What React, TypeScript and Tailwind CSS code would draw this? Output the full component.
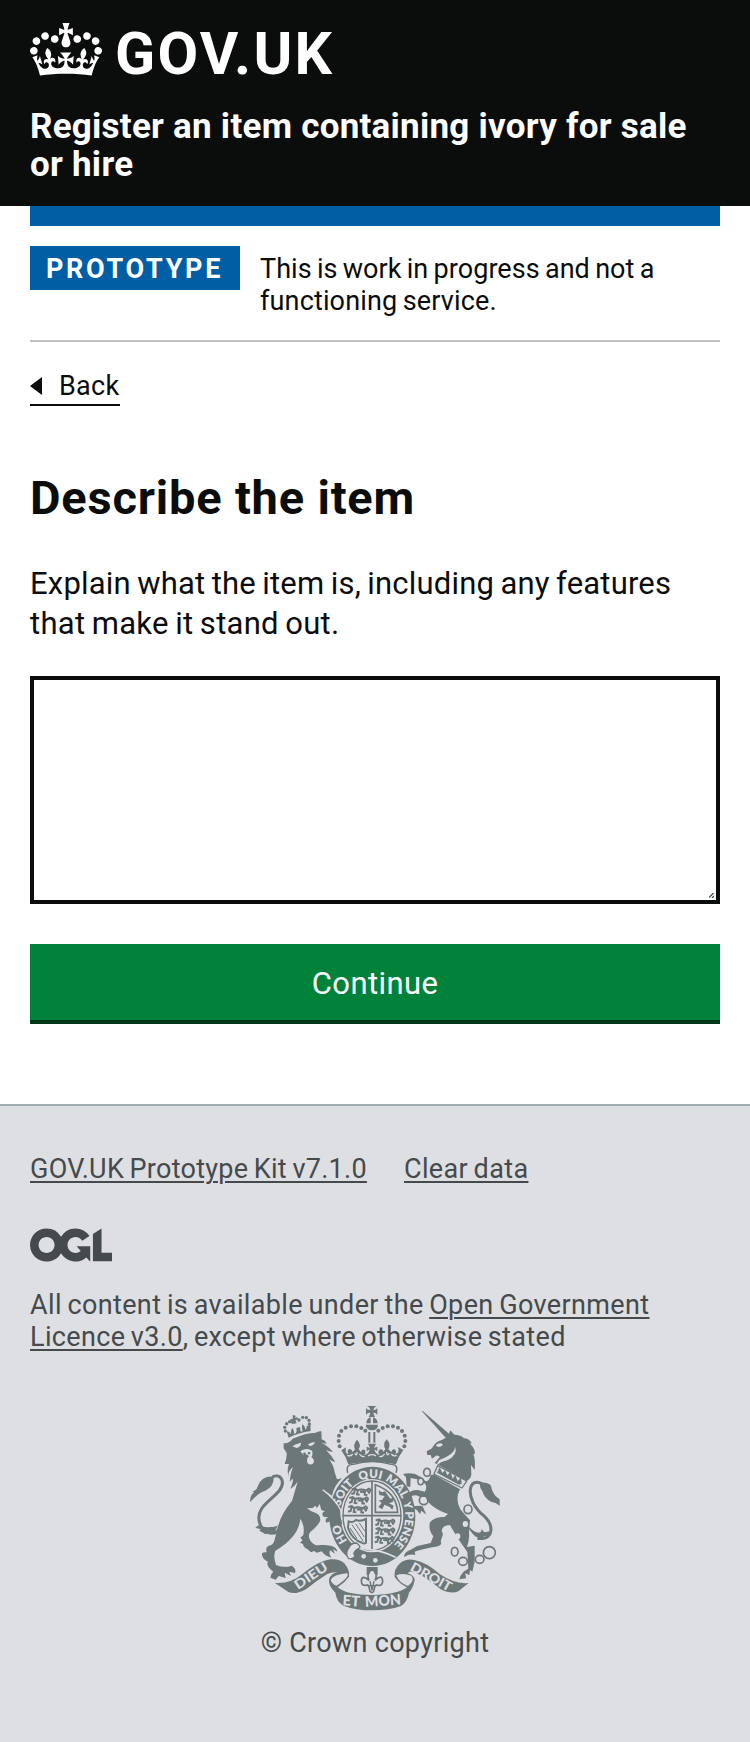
import React from "react";

function Crown() {
  return (
    <svg viewBox="0 0 132 97" className="h-[53px] w-[72px] shrink-0" fill="currentColor" aria-hidden="true">
      <path
        fillRule="evenodd"
        d="M25 30.2c3.5 1.5 7.7-.2 9.1-3.7 1.5-3.6-.2-7.8-3.9-9.2-3.6-1.4-7.6.3-9.1 3.9-1.4 3.5.3 7.5 3.9 9zM9 39.5c3.6 1.5 7.8-.2 9.2-3.7 1.5-3.6-.2-7.8-3.9-9.1-3.6-1.5-7.6.2-9.1 3.8-1.4 3.5.3 7.5 3.8 9zM4.4 57.2c3.5 1.5 7.7-.2 9.1-3.8 1.5-3.6-.2-7.7-3.9-9.1-3.5-1.5-7.6.3-9.1 3.8-1.4 3.5.3 7.6 3.9 9.1zm38.3-21.4c3.5 1.5 7.7-.2 9.1-3.8 1.5-3.6-.2-7.7-3.9-9.1-3.6-1.5-7.6.3-9.1 3.8-1.3 3.6.4 7.7 3.9 9.1zm64.4-5.6c-3.6 1.5-7.8-.2-9.1-3.7-1.5-3.6.2-7.8 3.8-9.2 3.6-1.4 7.7.3 9.2 3.9 1.3 3.5-.4 7.5-3.9 9zm15.9 9.3c-3.6 1.5-7.7-.2-9.1-3.7-1.5-3.6.2-7.8 3.7-9.1 3.6-1.5 7.7.2 9.2 3.8 1.5 3.5-.3 7.5-3.8 9zm4.7 17.7c-3.6 1.5-7.8-.2-9.2-3.8-1.5-3.6.2-7.7 3.9-9.1 3.6-1.5 7.7.3 9.2 3.8 1.3 3.5-.4 7.6-3.9 9.1zM89.3 35.8c-3.6 1.5-7.8-.2-9.2-3.8-1.4-3.6.2-7.7 3.9-9.1 3.6-1.5 7.7.3 9.2 3.8 1.4 3.6-.3 7.7-3.9 9.1zM69.7 17.7l8.9 4.7V9.3l-8.9 2.8c-.2-.3-.5-.6-.9-.9L72.4 0H59.6l3.5 11.2c-.3.3-.6.5-.9.9l-8.8-2.8v13.1l8.8-4.7c.3.3.6.7.9.9l-5 15.4v.1c-.2.8-.4 1.6-.4 2.4 0 4.1 3.1 7.5 7 8.1h.2c.3 0 .7.1 1 .1.4 0 .7 0 1-.1h.2c4-.6 7.1-4.1 7.1-8.1 0-.8-.1-1.7-.4-2.4V34l-5.1-15.4c.4-.2.7-.6 1-.9zM66 92.8c16.9 0 32.8 1.1 47.1 3.2 4-16.9 8.9-26.7 14-33.5l-9.6-3.4c1 4.9 1.1 7.2 0 10.2-1.5-1.4-3-4.3-4.2-8.7L108.6 76c2.8-2 5-3.2 7.5-3.3-4.4 9.4-10 11.9-13.6 11.2-4.3-.8-6.3-4.6-5.6-7.9 1-4.7 5.7-5.9 8-.5 4.3-8.7-3-11.4-7.6-8.8 7.1-7.2 7.9-13.5 2.1-21.1-8 6.1-8.1 12.3-4.5 20.8-4.7-5.4-12.1-2.5-9.5 6.2 3.4-5.2 7.9-2 7.2 3.1-.6 4.3-6.4 7.8-13.5 7.2-10.3-.9-10.9-8-11.2-13.8 2.5-.5 7.1 1.8 11 7.3L80.2 60c-4.1 4.4-8 5.3-12.3 5.4 1.4-4.4 8-11.6 8-11.6H55.5s6.4 7.2 7.9 11.6c-4.2-.1-8-1-12.3-5.4l1.4 16.4c3.9-5.5 8.5-7.7 10.9-7.3-.3 5.8-.9 12.8-11.1 13.8-7.2.6-12.9-2.9-13.5-7.2-.7-5 3.8-8.3 7.1-3.1 2.7-8.7-4.6-11.6-9.4-6.2 3.7-8.5 3.6-14.7-4.6-20.8-5.8 7.6-5 13.9 2.2 21.1-4.7-2.6-11.9.1-7.7 8.8 2.3-5.5 7.1-4.2 8.1.5.7 3.3-1.3 7.1-5.7 7.9-3.5.7-9-1.8-13.5-11.2 2.5.1 4.7 1.3 7.5 3.3l-4.7-15.4c-1.2 4.4-2.7 7.2-4.3 8.7-1.1-3-.9-5.3 0-10.2l-9.5 3.4c5 6.9 9.9 16.7 14 33.5 14.8-2.1 30.8-3.2 47.7-3.2z"
      />
    </svg>
  );
}

function OglLogo() {
  return (
    <svg viewBox="0 0 483.2 195.7" className="block h-[34px] w-[82px]" fill="currentColor" aria-hidden="true">
      <path d="M421.5 142.8V.1l-50.7 32.3v161.1h112.4v-50.7zm-122.3-9.6A47.12 47.12 0 0 1 221 97.8c0-26 21.1-47.1 47.1-47.1 16.7 0 31.4 8.7 39.7 21.8l42.7-27.2A97.63 97.63 0 0 0 268.1 0c-36.5 0-68.3 20.1-85.1 49.7A98 98 0 0 0 97.8 0C43.9 0 0 43.9 0 97.8s43.9 97.8 97.8 97.8c36.5 0 68.3-20.1 85.1-49.7a97.76 97.76 0 0 0 149.6 25.4l19.4 22.2h3v-87.8h-80l24.3 27.5zM97.8 145c-26 0-47.1-21.1-47.1-47.1s21.1-47.1 47.1-47.1 47.1 21.1 47.1 47.1S123.8 145 97.8 145" />
    </svg>
  );
}

const INK = "#6c7777";
const PAPER = "#dedfe3";

const crownPearls = [
  [299, 499], [296, 483], [297, 467], [304, 453], [317, 443], [333, 439], [349, 439], [364, 444], [376, 452],
  [493, 499], [496, 483], [494, 467], [486, 453], [474, 443], [459, 439], [443, 439], [428, 444], [415, 452],
];
const lionPearls = [
  [136, 453], [134, 442], [140, 431], [149, 425], [158, 427], [177, 420], [188, 412], [199, 413], [207, 421], [208, 432],
];
const chainLinks = [
  [561, 577, 10, 12], [542, 604, 8, 10], [551, 661, 13, 13], [684, 688, 12, 13],
  [644, 815, 10, 13], [669, 844, 13, 12], [719, 838, 13, 12], [748, 818, 18, 18],
];

function Lion() {
  return (
    <g>
      <path d="M146 473 L140 454 Q150 455 151 463 Q153 449 157 443 Q162 451 163 462 Q169 461 170 452 L169 444 L180 441 L181 451 Q183 456 188 454 Q184 443 187 433 Q196 439 196 450 Q202 445 200 438 L211 434 L212 453 Q177 458 146 473z" />
      <path d="M158 405 l9 2 -2 7 7 -3 2 9 -8 -1 4 10 -8 3 -2 -10 -6 4 -3 -9 8 -1z" />
      {lionPearls.map(([x, y], i) => <circle key={i} cx={x} cy={y} r="5" />)}
      <path d="M131 490 Q148 490 158 476 Q198 458 227 458 Q236 452 244 454 L245 478 Q256 481 260 491 Q249 490 243 488 Q263 496 279 516 Q266 515 258 510 Q276 528 286 546 Q275 545 267 538 Q281 556 284 577 L289 592 Q287 601 306 595 Q282 617 276 647 L247 627 Q282 659 294 681 Q300 700 307 733 L295 728 L292 735 L283 726 L276 737 L270 724 L259 728 Q252 717 265 712 L250 710 Q242 697 255 694 L244 690 L239 672 L231 684 L226 677 L218 684 L201 685 Q212 694 220 696 Q245 703 240 724 Q229 743 211 756 Q202 765 211 782 Q225 800 241 795 Q258 794 272 797 Q291 801 292 815 L279 807 L285 822 L271 811 Q264 819 274 833 Q254 828 245 814 L231 818 L222 813 L213 817 L203 808 Q190 802 189 792 L180 788 L188 781 L181 773 L190 765 Q195 737 181 716 Q178 747 157 771 Q137 795 106 812 Q99 829 108 855 Q131 865 155 857 Q170 867 165 879 L148 875 L153 888 L134 878 L137 894 L116 888 L107 899 L91 893 Q91 882 100 875 Q76 856 84 845 Q64 836 66 820 Q72 815 80 817 Q75 801 86 797 Q98 797 103 783 Q107 767 113 742 Q124 700 156 663 L173 605 Q164 619 151 627 Q163 597 157 596 L149 606 Q152 577 159 561 Q140 577 147 594 Q139 573 147 552 L134 552 Q141 535 140 519 L131 505z" />
      <path d="M120 745 C101 772 65 759 58 724 C48 682 92 663 117 633 C140 602 119 579 97 591" fill="none" stroke={INK} strokeWidth="9" />
      <path d="M101 590 Q103 619 76 632 Q55 638 31 666 Q28 650 42 637 L37 635 Q52 629 54 617 Q67 586 101 590z" />
      <path d="M46 743 Q54 734 61 735 Q74 744 90 741 Q108 741 114 735 L104 757 Q92 751 76 763 Q69 757 58 752 L62 748z" />
      <g fill={PAPER}>
        <path d="M157 499 Q166 492 183 488 Q184 500 170 504z M204 493 Q213 487 225 486 Q221 498 209 498z" />
        <path d="M181 514 Q200 501 216 512 Q220 523 214 531 Q226 540 220 550 Q210 558 202 548 Q199 535 207 529 Q203 520 190 525z" />
      </g>
      <path d="M188 520 l7 -3 4 7 -6 3z M204 516 l7 0 -1 7 -7 0z" />
      <path d="M248 629 Q285 656 302 690 L305 718" fill="none" stroke={PAPER} strokeWidth="4" />
    </g>
  );
}

function Unicorn() {
  return (
    <g>
      <path d="M545 393 L549 394 L627 461 L631 451 L643 464 Q662 464 672 475 Q687 475 695 490 L690 491 Q705 505 705 521 L700 522 Q707 541 704 570 L693 555 L694 584 Q692 598 678 603 L596 555 L584 549 L600 530 L590 526 L576 536 L572 525 L562 525 L560 514 L576 505 Q585 484 607 479 L617 473z" />
      <path d="M587 496 Q600 485 609 494 Q603 501 594 501z M598 540 Q643 524 646 501 Q653 526 622 541 Q605 544 587 557z" fill={PAPER} />
      <path d="M583 584 L660 628 Q644 656 661 688 Q674 704 690 721 L687 760 Q689 778 681 801 L704 797 L704 845 L697 875 L690 870 L688 885 L676 880 L678 895 L658 898 Q662 877 685 866 L682 816 Q646 765 630 735 Q607 736 605 752 L609 763 L602 784 Q608 794 594 799 Q540 809 524 815 L526 825 Q509 821 492 831 Q493 815 512 809 L532 798 L572 789 L580 769 Q564 749 570 727 Q583 711 613 711 L624 702 Q567 682 557 651 L538 650 Q524 641 510 651 L523 680 L517 681 Q536 675 548 679 L559 704 L544 692 L540 703 L530 689 Q519 686 513 668 L500 645 Q510 630 533 630 L555 635 Q564 617 552 608 L532 598 L512 594 L511 621 L500 619 L498 592 L489 582 Q507 577 525 582 Q545 590 557 604 Q568 603 572 584z" />
      <path d="M593 557 L680 603 L666 624 L582 582z" fill={PAPER} stroke={INK} strokeWidth="4" />
      <path d="M591 578 L599 562 L607 579 L615 570 L622 586 L632 575 L638 596 L646 584 L653 604 L663 592 L665 611 L657 614z" />
      <path d="M712 775 C763 782 762 735 731 707 C670 656 686 585 728 613" fill="none" stroke={INK} strokeWidth="9" />
      <path d="M720 608 Q756 605 756 629 Q761 646 779 658 L779 677 Q767 667 753 665 Q732 654 727 633 Q718 623 720 608z" />
      <path d="M681 735 Q708 764 722 757 L725 748 L733 757 L756 753 L743 768 L733 768 L726 781 Q719 769 707 770 Q692 758 681 735z" />
      <g fill="none" stroke={INK} strokeWidth="5">
        {chainLinks.map(([x, y, rx, ry], i) => <ellipse key={i} cx={x} cy={y} rx={rx} ry={ry} />)}
      </g>
      <g fill={PAPER}>
        <ellipse cx="676" cy="732" rx="8" ry="9" />
        <ellipse cx="653" cy="769" rx="8" ry="9" />
        <ellipse cx="542" cy="604" rx="6" ry="8" />
        <ellipse cx="684" cy="688" rx="7" ry="8" />
      </g>
    </g>
  );
}

function RoyalCrown() {
  return (
    <g>
      <path d="M378 378 Q388 378 391 390 Q382 391 378 384 V405 Q382 397 391 398 Q389 407 386 411 H405 Q402 407 400 398 Q408 397 412 405 V384 Q408 391 400 390 Q403 379 412 378z" />
      <path d="M379 430 Q380 414 392 412 V430z M399 412 Q412 415 413 430 H399z" />
      <path d="M377 434 H414 Q414 450 396 451 Q378 450 377 434z" />
      {crownPearls.map(([x, y], i) => <circle key={i} cx={x} cy={y} r="6" />)}
      <path d="M388 456 V488 M403 456 V488" stroke={INK} strokeWidth="6" />
      <path d="M304 511 L318 502 L317 514 Q319 525 325 520 Q319 511 328 507 Q336 507 337 516 L345 509 Q338 493 351 479 Q365 493 356 508 L363 516 Q366 504 375 511 Q379 523 371 526 Q386 523 389 508 L380 514 V500 L390 504 L384 491 H408 L402 504 L412 500 V514 L403 508 Q406 523 421 526 Q411 520 418 509 Q427 505 430 515 L436 508 Q427 492 440 478 Q454 492 445 508 L454 516 Q457 504 466 509 Q471 518 465 521 Q473 523 476 513 L474 501 L490 510 Q475 529 468 553 Q397 539 325 553 Q318 530 304 511z" />
      <g fill="none" stroke={PAPER} strokeWidth="4">
        <path d="M322 526 Q331 531 338 522 M344 520 Q351 530 351 516 M358 522 Q364 531 374 530 M384 528 Q396 520 408 528 M418 530 Q428 531 434 522 M440 516 Q440 530 448 520 M454 522 Q462 531 470 526" />
      </g>
      <path d="M323 579 Q316 552 340 553 Q397 537 454 553 Q477 554 468 579" fill={PAPER} stroke={INK} strokeWidth="4" />
    </g>
  );
}

function LionPassant({ x, y }: { x: number; y: number }) {
  return (
    <g transform={`translate(${x} ${y})`} fill="none" stroke={INK} strokeWidth="6">
      <path d="M2 5 l10 -3 7 6 q13 -5 25 1 l10 -6 q8 4 1 9 M12 5 l-3 12 -8 2 M20 9 l-2 11 8 1 M42 10 l-1 11 8 1 M50 9 l6 9 M27 12 l12 1" />
    </g>
  );
}

function Shield() {
  return (
    <g>
      <ellipse cx="397" cy="709" rx="133" ry="152" fill={PAPER} />
      <ellipse cx="397" cy="709" rx="129" ry="149" />
      <ellipse cx="396" cy="707" rx="94" ry="110" fill={PAPER} />
      <ellipse cx="396" cy="707" rx="87" ry="104" fill="none" stroke={INK} strokeWidth="4" />
      <path d="M396 603 V811 M308 707 H484" stroke={INK} strokeWidth="5" />
      <LionPassant x={333} y={623} />
      <LionPassant x={326} y={649} />
      <LionPassant x={323} y={676} />
      <LionPassant x={405} y={716} />
      <LionPassant x={405} y={742} />
      <LionPassant x={403} y={768} />
      <path d="M406 614 V697 H473 Q470 637 406 614z" fill="none" stroke={INK} strokeWidth="5" />
      <path d="M415 681 L425 669 L416 661 L426 660 L434 648 L418 645 L416 631 L426 637 L435 634 L451 656 L462 652 L459 665 L447 670 L461 677 L457 689 L448 680 L433 674 L427 688z" />
      <path d="M326 724 Q340 729 347 720 Q362 725 378 717 V788 Q372 793 366 788 Q337 780 324 744z" fill="none" stroke={INK} strokeWidth="6" />
      <path d="M336 734 L370 784 M347 731 L373 771 M358 729 L375 754 M330 744 L351 776" stroke={INK} strokeWidth="3" />
      <defs>
        <path id="garter" d="M341 802 A99 114 0 1 1 453 802" />
      </defs>
      <g fill={PAPER} fontSize="35" fontWeight="800" fontFamily="Lato, 'Liberation Sans', sans-serif" textAnchor="middle">
        <text><textPath href="#garter" startOffset="10%">HO</textPath></text>
        <text><textPath href="#garter" startOffset="32%">SOIT</textPath></text>
        <text><textPath href="#garter" startOffset="49%">QUI</textPath></text>
        <text><textPath href="#garter" startOffset="64%">MAL</textPath></text>
        <text><textPath href="#garter" startOffset="75%">Y</textPath></text>
        <text><textPath href="#garter" startOffset="88%">PENSE</textPath></text>
      </g>
      <path d="M342 796 Q363 805 390 809 Q427 812 467 832" fill="none" stroke={PAPER} strokeWidth="5" />
      <path d="M326 836 Q313 821 328 801 Q333 789 349 789 Q365 799 357 805 Q347 808 341 821 Q350 831 335 836z" fill={PAPER} stroke={INK} strokeWidth="4" />
      <circle cx="371" cy="829" r="7" fill={PAPER} />
      <circle cx="406" cy="841" r="7" fill={PAPER} />
    </g>
  );
}

function Ribbon() {
  return (
    <g>
      <path d="M105 909 Q153 912 190 880 Q236 843 271 838 Q297 835 313 850 Q331 872 327 890 Q315 907 293 922 Q318 945 397 945 Q472 944 501 922 Q478 911 464 891 Q461 867 480 850 Q500 834 525 841 Q557 846 600 883 Q646 914 686 909 L655 934 Q634 944 602 928 Q545 880 516 876 Q509 872 503 880 Q522 884 524 901 Q519 925 507 938 Q502 965 483 978 Q445 991 397 991 Q347 991 310 977 Q290 965 286 938 Q265 919 267 898 Q273 880 292 877 Q278 875 262 882 Q230 902 200 926 Q166 946 145 936z" />
      <path d="M272 899 Q284 882 322 880 Q329 893 289 917 Q275 911 272 899z M469 886 Q489 878 514 887 Q526 900 504 918 Q477 909 469 886z" fill={PAPER} />
      <g fill={PAPER} fontWeight="900" fontFamily="Lato, 'Liberation Sans', sans-serif">
        <text transform="translate(174 930) rotate(-34)" fontSize="39" textLength="112" lengthAdjust="spacingAndGlyphs">DIEU</text>
        <text transform="translate(508 870) rotate(29)" fontSize="40" textLength="135" lengthAdjust="spacingAndGlyphs">DROIT</text>
        <text transform="translate(307 976) rotate(4)" fontSize="44" textLength="52" lengthAdjust="spacingAndGlyphs">ET</text>
        <text transform="translate(376 981) rotate(-4)" fontSize="44" textLength="108" lengthAdjust="spacingAndGlyphs">MON</text>
      </g>
      <path d="M380 861 H413 V886 Q397 872 380 886z" />
      <path d="M396 867 Q416 885 405 901 Q427 880 428 904 Q427 920 410 915 L405 917 L402 930 Q399 943 390 934 L386 917 L381 915 Q364 920 364 902 Q366 883 387 901 Q378 884 396 867z" fill={PAPER} stroke={INK} strokeWidth="5" />
      <path d="M380 917 H412 M390 903 L396 931 L402 903" fill="none" stroke={INK} strokeWidth="4" />
    </g>
  );
}

function CoatOfArms() {
  return (
    <svg viewBox="30 375 750 618" className="block h-[206px] w-[250px]" fill={INK} aria-hidden="true">
      <RoyalCrown />
      <Shield />
      <Ribbon />
      <Lion />
      <Unicorn />
    </svg>
  );
}

const link = "underline decoration-2 underline-offset-[3px]";

export default function App() {
  return (
    <div className="min-h-[1742px] bg-[#dedfe3] font-[Roboto,'Liberation_Sans',sans-serif] text-[#0b0c0c]">
      <header className="h-[206px] bg-[#0b0c0c] px-[30px] pt-[23px] text-white">
        <div className="flex h-[53px] items-center">
          <Crown />
          <span className="ml-[13px] pt-[8px] text-[59px] leading-[60px] font-bold tracking-[2.2px] whitespace-nowrap">GOV.UK</span>
        </div>
        <p className="mt-[32px] text-[35px] leading-[38px] font-bold whitespace-nowrap">
          <span className="block tracking-[0.25px]">Register an item containing ivory for sale</span>
          <span className="block tracking-[0.25px]">or hire</span>
        </p>
      </header>

      <div className="h-[898px] bg-white px-[30px]">
        <div className="h-5 bg-[#005ea5]" />
        <div className="mt-5 flex h-[96px] items-start border-b-2 border-[#bfc1c3]">
          <strong className="h-[44px] w-[210px] bg-[#005ea5] pt-px pl-[16px] text-[27px] leading-[44px] font-bold tracking-[2.7px] text-white">
            PROTOTYPE
          </strong>
          <p className="ml-5 pt-[7px] text-[27px] leading-8 [word-spacing:-1.5px] whitespace-nowrap">
            <span className="block tracking-[0.05px]">This is work in progress and not a</span>
            <span className="block tracking-[0.15px]">functioning service.</span>
          </p>
        </div>
        <a className="mt-[28px] flex h-[36px] w-[90px] items-start border-b-2 border-[#0b0c0c]">
          <svg viewBox="0 0 12 18" className="mt-[7px] h-[18px] w-3"><path d="M0 9 12 0v18z" fill="#0b0c0c" /></svg>
          <span className="ml-[17px] text-[27px] leading-8 tracking-[0.3px]">Back</span>
        </a>
        <h1 className="mt-[67px] text-[47px] leading-[50px] font-bold tracking-[0.8px]">Describe the item</h1>
        <p className="mt-[41px] text-[31px] leading-10 [word-spacing:-1.5px] whitespace-nowrap">
          <span className="block tracking-[0.19px]">Explain what the item is, including any features</span>
          <span className="block tracking-[0.27px]">that make it stand out.</span>
        </p>
        <div className="mt-[32px] flex h-[228px] items-end justify-end border-4 border-[#0b0c0c] p-[2px]">
          <svg viewBox="0 0 5 5" className="h-[5px] w-[5px]"><path d="M0 4.5 4.5 0M3 5 5 3" stroke="#444" strokeWidth="1.2" /></svg>
        </div>
        <button className="mt-10 block h-20 w-full border-b-4 border-[#003618] bg-[#00823b] pt-[4px] text-[31px] leading-[38px] tracking-[0.4px] text-white">
          Continue
        </button>
      </div>

      <footer className="border-t-2 border-[#a1acb2] px-[30px] pt-[47px] text-[27px] leading-8 text-[#454a4c]">
        <div className="flex [word-spacing:-1.5px] whitespace-nowrap">
          <span className="w-[374px] tracking-[0.27px]"><a className={link}>GOV.UK Prototype Kit v7.1.0</a></span>
          <a className={`tracking-[0.35px] ${link}`}>Clear data</a>
        </div>
        <div className="mt-[43px]"><OglLogo /></div>
        <p className="mt-[27px] [word-spacing:-1.5px] whitespace-nowrap">
          <span className="block tracking-[0.37px]">All content is available under the <a className={link}>Open Government</a></span>
          <span className="block tracking-[0.34px]"><a className={link}>Licence v3.0</a>, except where otherwise stated</span>
        </p>
        <div className="mt-[52px] flex flex-col items-center">
          <CoatOfArms />
          <span className="mt-[16px] tracking-[0.3px]">© Crown copyright</span>
        </div>
      </footer>
    </div>
  );
}
